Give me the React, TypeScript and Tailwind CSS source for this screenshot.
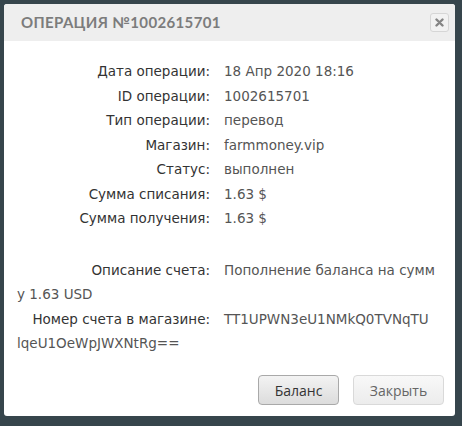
import React from "react";

const rows: [string, string][] = [
  ["Дата операции:", "18 Апр 2020 18:16"],
  ["ID операции:", "1002615701"],
  ["Тип операции:", "перевод"],
  ["Магазин:", "farmmoney.vip"],
  ["Статус:", "выполнен"],
  ["Сумма списания:", "1.63 $"],
  ["Сумма получения:", "1.63 $"],
];

export default function App() {
  return (
    <div className="w-[462px] h-[426px] bg-[#36454c] pt-[4px] pl-[4px]" style={{ fontFamily: '"DejaVu Sans", sans-serif' }}>
      <div className="w-[451px] h-[412px] bg-white rounded-[3px] overflow-hidden flex flex-col">
        <div className="h-[37px] shrink-0 bg-[#eeeeee] flex items-center justify-between pl-[17px] pr-[6px]">
          <div className="text-[15px] font-bold text-[#7c7c7c] tracking-[0.35px]" style={{ fontFamily: '"Lato", sans-serif' }}>
            ОПЕРАЦИЯ №1002615701
          </div>
          <div className="w-[19px] h-[19px] border border-[#d6d6d6] rounded-[3px] bg-[#f2f2f2] flex items-center justify-center">
            <svg width="9" height="9" viewBox="0 0 9 9">
              <path d="M1.5 1.5 L7.5 7.5 M7.5 1.5 L1.5 7.5" stroke="#858585" strokeWidth="2.4" strokeLinecap="round" />
            </svg>
          </div>
        </div>
        <div className="pl-[13px] pr-[13px] pt-[18px] text-[13.5px] text-[#444] leading-[24.5px] whitespace-nowrap">
          {rows.map(([l, v]) => (
            <div key={l} className="flex">
              <div className="w-[193px] text-right text-[#333]">{l}</div>
              <div className="pl-[14px] text-[#555]">{v}</div>
            </div>
          ))}
          <div className="h-[27px]" />
          <div className="flex">
            <div className="w-[193px] text-right text-[#333]">Описание счета:</div>
            <div className="pl-[14px] text-[#555]">Пополнение баланса на сумм</div>
          </div>
          <div className="text-[#555]">у 1.63 USD</div>
          <div className="flex">
            <div className="w-[193px] text-right text-[#333]">Номер счета в магазине:</div>
            <div className="pl-[14px] text-[#555]">TT1UPWN3eU1NMkQ0TVNqTU</div>
          </div>
          <div className="text-[#555]">lqeU1OeWpJWXNtRg==</div>
        </div>
        <div className="flex-1" />
        <div className="flex justify-end gap-[14px] pr-[11px] pb-[11px]" style={{ fontFamily: '"Open Sans", sans-serif' }}>
          <button className="w-[81px] h-[30px] rounded-[4px] border border-[#a9a9a9] bg-gradient-to-b from-[#f3f3f3] to-[#dcdcdc] text-[14px] text-[#333]">
            Баланс
          </button>
          <button className="w-[91px] h-[30px] rounded-[4px] border border-[#d9d9d9] bg-gradient-to-b from-[#f8f8f8] to-[#ececec] text-[14px] text-[#666]">
            Закрыть
          </button>
        </div>
      </div>
    </div>
  );
}
